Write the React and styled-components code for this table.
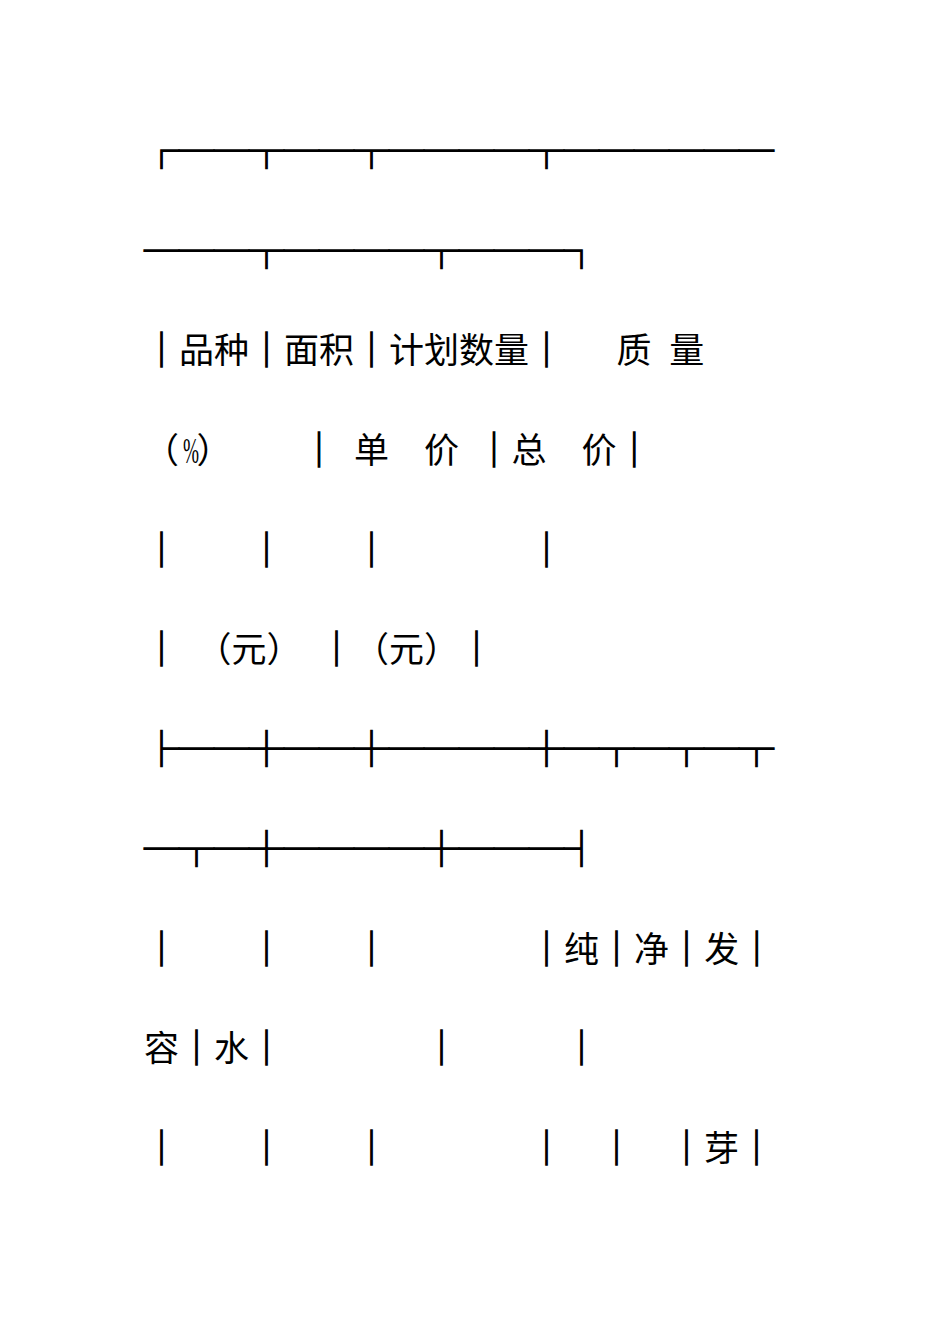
import React from "react";
import styled, { createGlobalStyle } from "styled-components";

const GlobalStyle = createGlobalStyle`
  html, body {
    margin: 0;
    padding: 0;
    background: #ffffff;
  }
`;

const Page = styled.div`
  width: 950px;
  min-height: 1344px;
  box-sizing: border-box;
  padding: 99px 0 0 144px;
  background: #ffffff;
  color: #000000;
  font-family: "Noto Sans CJK SC", "Noto Sans", sans-serif;
  font-size: 35px;
`;

const Line = styled.div`
  height: 99.7px;
  line-height: 99.7px;
  white-space: pre;
`;

// table rules drawn with box-drawing characters, a little heavier
const Rule = styled.span`
  -webkit-text-stroke: 1.3px #000;
`;

// half-width blank, as the plain spaces of the source document
const Gap = styled.span`
  display: inline-block;
  width: 0.5em;
`;

// half-width character (the % sign)
const Half = styled.span`
  display: inline-block;
  width: 0.5em;
  text-align: center;
  font-family: "Liberation Serif", serif;
  transform: scaleX(0.55);
`;

const isRule = (ch) => ch >= "\u2500" && ch <= "\u257f";

// "^" = half-width blank, "%" = half-width sign
function renderLine(text) {
  const parts = [];
  let buf = "";
  let bufRule = false;
  const flush = (key) => {
    if (buf) {
      parts.push(bufRule ? <Rule key={"r" + key}>{buf}</Rule> : buf);
      buf = "";
    }
  };
  [...text].forEach((ch, i) => {
    if (ch === "^") {
      flush(i);
      parts.push(<Gap key={i} />);
    } else if (ch === "%") {
      flush(i);
      parts.push(<Half key={i}>%</Half>);
    } else {
      const r = isRule(ch);
      if (buf && r !== bufRule) flush(i);
      bufRule = r;
      buf += ch;
    }
  });
  flush("end");
  return parts;
}

const lines = [
  "┌──┬──┬────┬──────",
  "───┬────┬───┐",
  "│品种│面积│计划数量│^^^质^量",
  "（%）^^^^│^单^^价^│总^^价│",
  "│^^^^│^^^^│^^^^^^^^│",
  "│^（元）^│（元）│",
  "├──┼──┼────┼─┬─┬─┬",
  "─┬─┼────┼───┤",
  "│^^^^│^^^^│^^^^^^^^│纯│净│发│",
  "容│水│^^^^^^^^│^^^^^^│",
  "│^^^^│^^^^│^^^^^^^^│^^│^^│芽│",
];

export default function App() {
  return (
    <>
      <GlobalStyle />
      <Page>
        {lines.map((l, i) => (
          <Line key={i}>{renderLine(l)}</Line>
        ))}
      </Page>
    </>
  );
}
